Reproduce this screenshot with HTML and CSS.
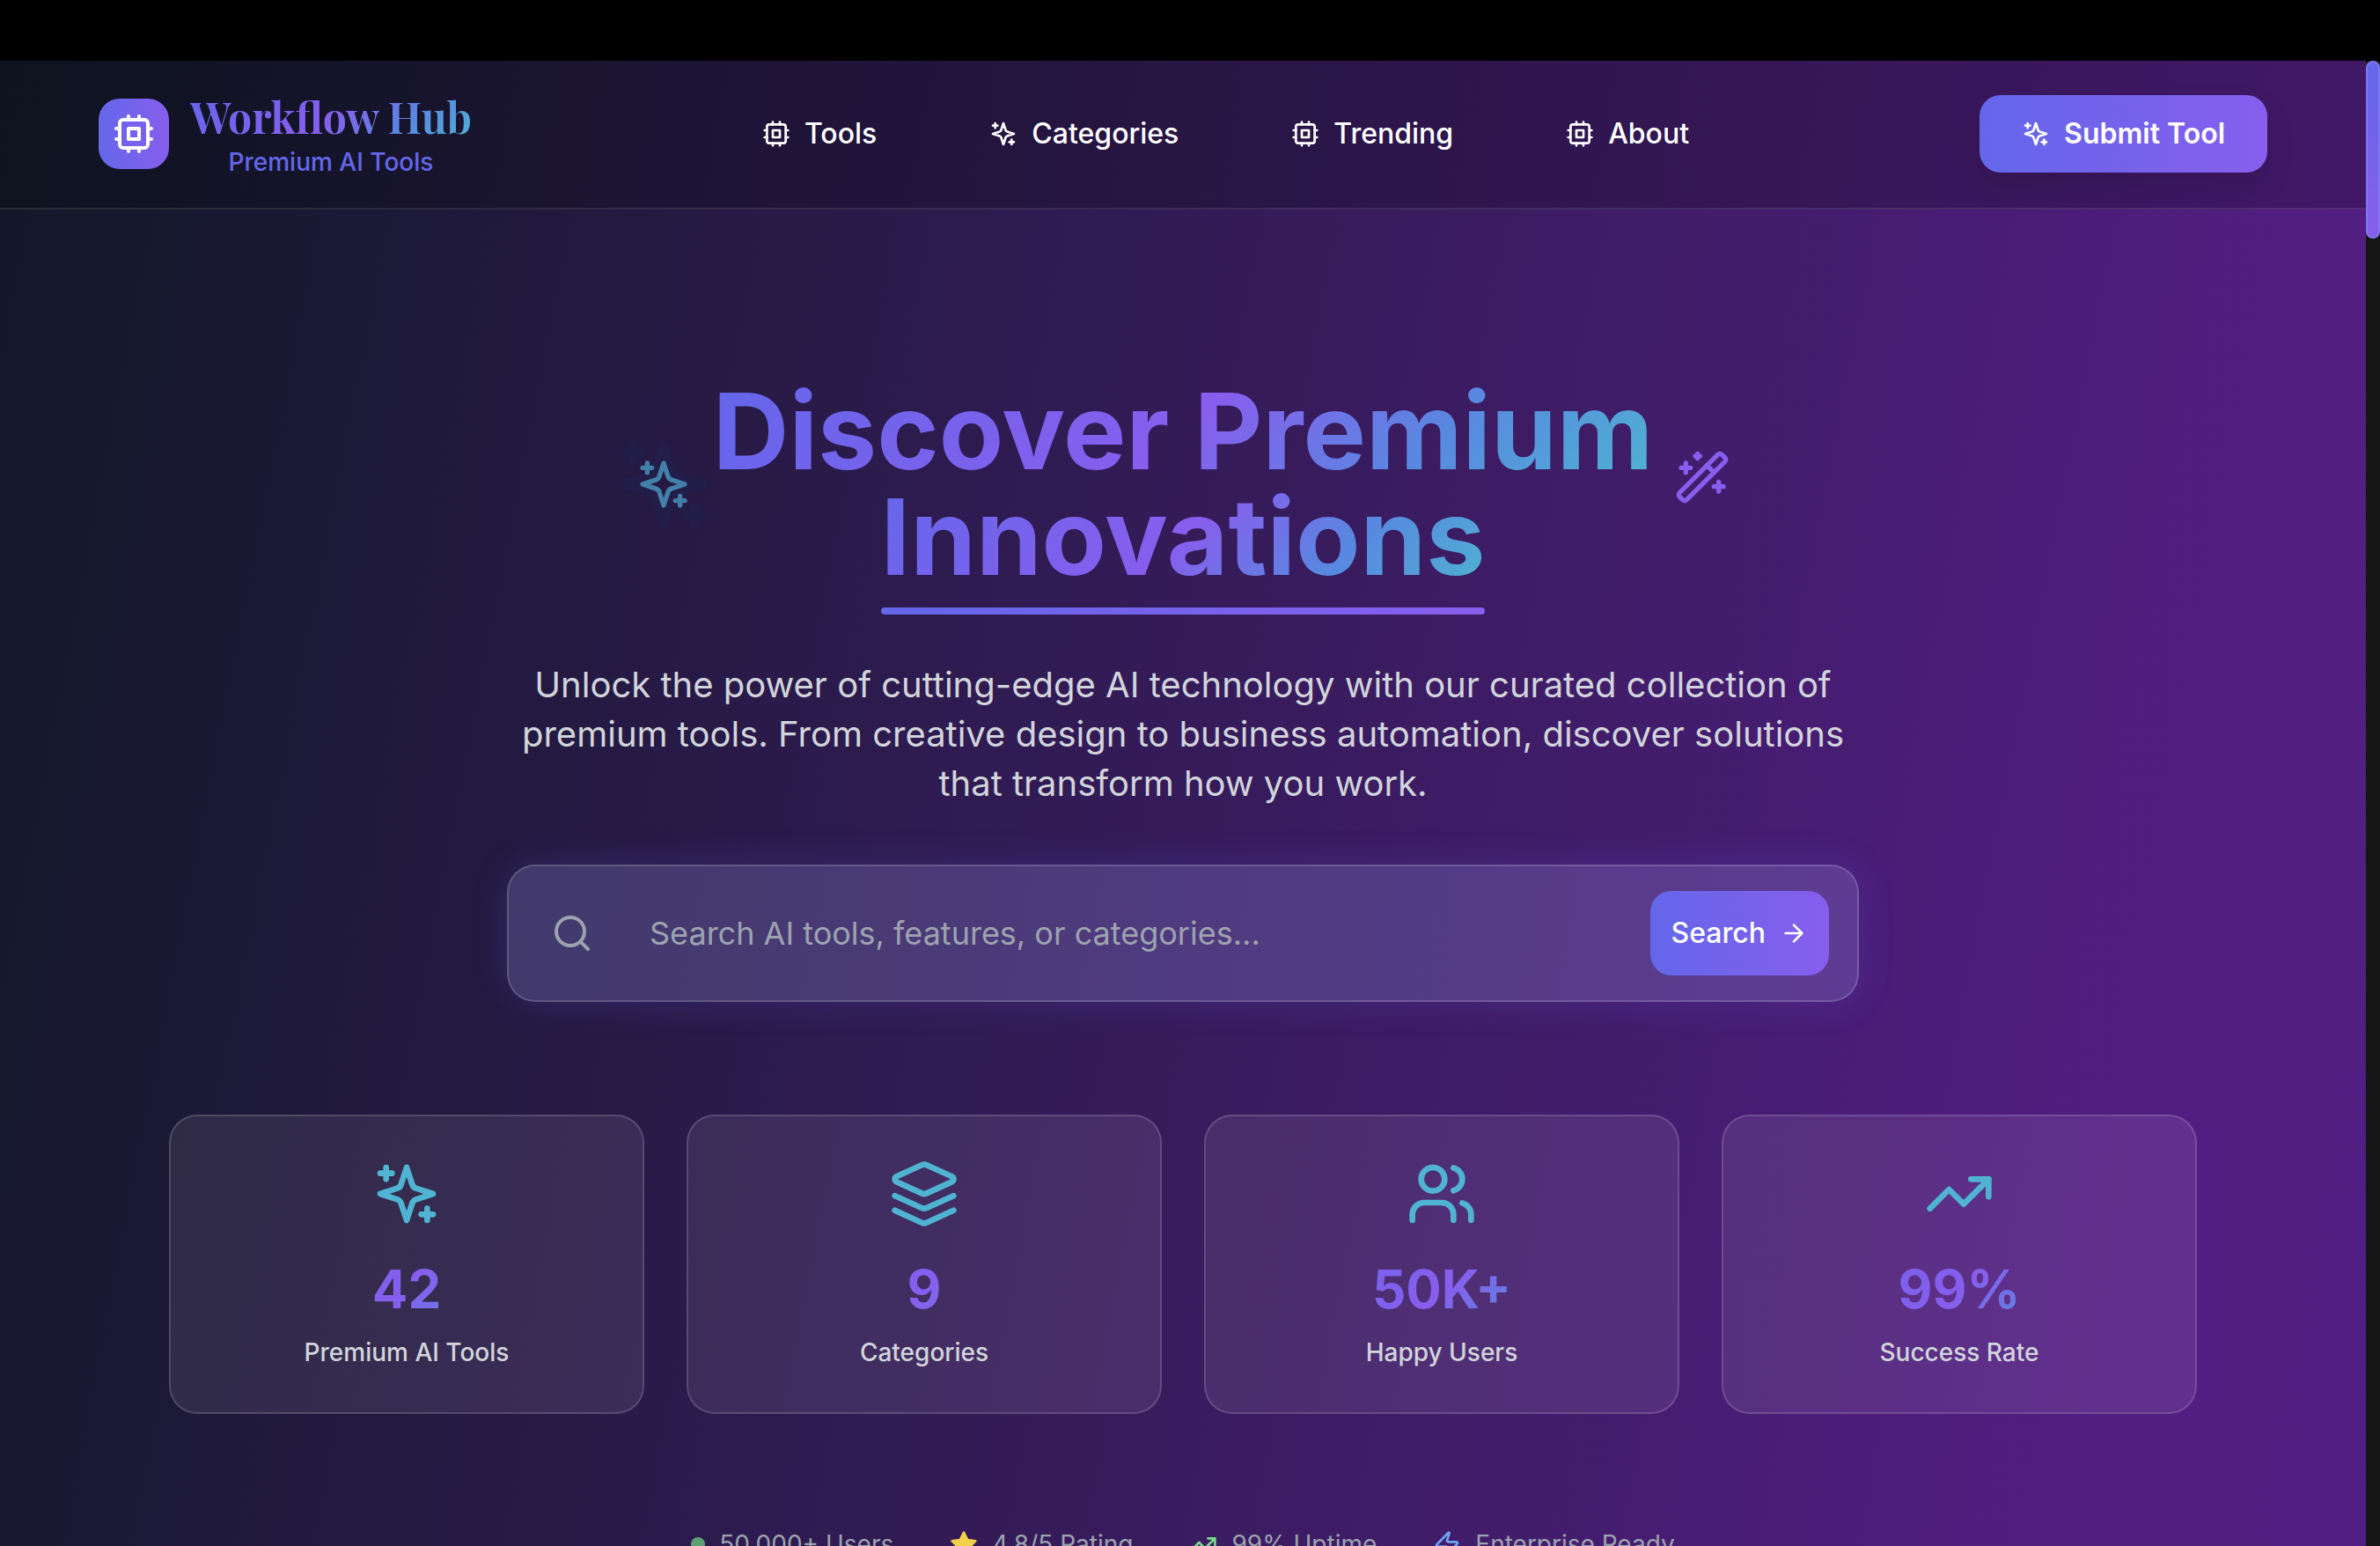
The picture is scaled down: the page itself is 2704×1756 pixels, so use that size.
FILE: index.html
```html
<!DOCTYPE html>
<html lang="en">
<head>
<meta charset="utf-8">
<title>Workflow Hub</title>
<link rel="stylesheet" href="styles.css">
</head>
<body>
<svg class="sprite" aria-hidden="true">
  <symbol id="cpu" viewBox="0 0 24 24"><rect x="4" y="4" width="16" height="16" rx="2"/><rect x="9" y="9" width="6" height="6"/><path d="M15 2v2M15 20v2M2 15h2M2 9h2M20 15h2M20 9h2M9 2v2M9 20v2"/></symbol>
  <symbol id="sparkles" viewBox="0 0 24 24"><path d="m12 3-1.912 5.813a2 2 0 0 1-1.275 1.275L3 12l5.813 1.912a2 2 0 0 1 1.275 1.275L12 21l1.912-5.813a2 2 0 0 1 1.275-1.275L21 12l-5.813-1.912a2 2 0 0 1-1.275-1.275L12 3Z"/><path d="M5 3v4M19 17v4M3 5h4M17 19h4"/></symbol>
  <symbol id="wand" viewBox="0 0 24 24"><path d="m21.64 3.64-1.28-1.28a1.21 1.21 0 0 0-1.72 0L2.36 18.64a1.21 1.21 0 0 0 0 1.72l1.28 1.28a1.2 1.2 0 0 0 1.72 0L21.64 5.36a1.2 1.2 0 0 0 0-1.72"/><path d="m14 7 3 3M5 6v4M19 14v4M10 2v2M7 8H3M21 16h-4M11 3H9"/></symbol>
  <symbol id="search" viewBox="0 0 24 24"><circle cx="11" cy="11" r="8"/><path d="m21 21-4.3-4.3"/></symbol>
  <symbol id="arrow" viewBox="0 0 24 24"><path d="M5 12h14M12 5l7 7-7 7"/></symbol>
  <symbol id="layers" viewBox="0 0 24 24"><path d="m12.83 2.18a2 2 0 0 0-1.66 0L2.6 6.08a1 1 0 0 0 0 1.83l8.58 3.91a2 2 0 0 0 1.66 0l8.58-3.9a1 1 0 0 0 0-1.83Z"/><path d="m22 17.65-9.17 4.16a2 2 0 0 1-1.66 0L2 17.65"/><path d="m22 12.65-9.17 4.16a2 2 0 0 1-1.66 0L2 12.65"/></symbol>
  <symbol id="users" viewBox="0 0 24 24"><path d="M16 21v-2a4 4 0 0 0-4-4H6a4 4 0 0 0-4 4v2"/><circle cx="9" cy="7" r="4"/><path d="M22 21v-2a4 4 0 0 0-3-3.87M16 3.13a4 4 0 0 1 0 7.75"/></symbol>
  <symbol id="trend" viewBox="0 0 24 24"><path d="m22 7-8.5 8.5-5-5L2 17"/><path d="M16 7h6v6"/></symbol>
  <symbol id="star" viewBox="0 0 24 24"><path d="m12 2 3.09 6.26L22 9.27l-5 4.87 1.18 6.88L12 17.77l-6.18 3.25L7 14.14 2 9.27l6.91-1.01Z"/></symbol>
  <symbol id="zap" viewBox="0 0 24 24"><path d="M4 14a1 1 0 0 1-.78-1.63l9.9-10.2a.5.5 0 0 1 .86.46l-1.92 6.02A1 1 0 0 0 13 10h7a1 1 0 0 1 .78 1.63l-9.9 10.2a.5.5 0 0 1-.86-.46l1.92-6.02A1 1 0 0 0 11 14z"/></symbol>
</svg>
<div class="titlebar"></div>
<div class="viewport">
  <div class="page">
    <header class="header">
      <a class="brand" href="#">
        <span class="brand-mark"><svg class="icon icon-md"><use href="#cpu"/></svg></span>
        <span class="brand-text">
          <span class="brand-name">Workflow Hub</span>
          <span class="brand-sub">Premium AI Tools</span>
        </span>
      </a>
      <nav class="nav">
        <a href="#"><svg class="icon"><use href="#cpu"/></svg>Tools</a>
        <a href="#"><svg class="icon"><use href="#sparkles"/></svg>Categories</a>
        <a href="#"><svg class="icon"><use href="#cpu"/></svg>Trending</a>
        <a href="#"><svg class="icon"><use href="#cpu"/></svg>About</a>
      </nav>
      <button class="submit" type="button"><svg class="icon"><use href="#sparkles"/></svg>Submit Tool</button>
    </header>
    <main class="hero">
      <div class="headline">
        <span class="spark">
          <svg class="icon icon-lg ghost"><use href="#sparkles"/></svg>
          <svg class="icon icon-lg glow"><use href="#sparkles"/></svg>
        </span>
        <h1><span class="line">Discover Premium</span><span class="line underlined">Innovations</span></h1>
        <svg class="icon icon-lg wand"><use href="#wand"/></svg>
      </div>
      <p class="lead">Unlock the power of cutting-edge AI technology with our curated collection of premium tools. From creative design to business automation, discover solutions that transform how you work.</p>
      <form class="search" role="search">
        <svg class="icon icon-md"><use href="#search"/></svg>
        <input type="text" aria-label="Search AI tools" placeholder="Search AI tools, features, or categories...">
        <button type="submit">Search<svg class="icon"><use href="#arrow"/></svg></button>
      </form>
      <section class="stats">
        <article class="stat"><svg class="icon icon-xl"><use href="#sparkles"/></svg><strong>42</strong><span>Premium AI Tools</span></article>
        <article class="stat"><svg class="icon icon-xl"><use href="#layers"/></svg><strong>9</strong><span>Categories</span></article>
        <article class="stat"><svg class="icon icon-xl"><use href="#users"/></svg><strong>50K+</strong><span>Happy Users</span></article>
        <article class="stat"><svg class="icon icon-xl"><use href="#trend"/></svg><strong>99%</strong><span>Success Rate</span></article>
      </section>
      <ul class="trust">
        <li><i class="dot"></i>50,000+ Users</li>
        <li><svg class="icon star"><use href="#star"/></svg>4.8/5 Rating</li>
        <li><svg class="icon green"><use href="#trend"/></svg>99% Uptime</li>
        <li><svg class="icon blue"><use href="#zap"/></svg>Enterprise Ready</li>
      </ul>
    </main>
  </div>
  <div class="scroll-track"><div class="scroll-thumb"></div></div>
</div>
</body>
</html>
```
FILE: styles.css
```css
:root {
  --indigo: #6467ea;
  --purple: #875eed;
  --cyan: #4fb3d1;
  --primary: linear-gradient(90deg, var(--indigo), var(--purple));
  --rainbow: linear-gradient(135deg, var(--indigo), var(--purple) 50%, #5888e0 75%, var(--cyan));
}

* { box-sizing: border-box; }

html, body { height: 100%; }

body {
  margin: 0;
  display: flex;
  flex-direction: column;
  overflow: hidden;
  background: #000;
  color: #fff;
  font-family: Inter, "Liberation Sans", sans-serif;
  font-size: 32px;
  line-height: 48px;
}

a { color: inherit; text-decoration: none; }

button, input {
  border: 0;
  color: inherit;
  font: inherit;
}

.sprite { position: absolute; width: 0; height: 0; }

.icon {
  flex: none;
  width: 32px;
  height: 32px;
  fill: none;
  stroke: currentColor;
  stroke-width: 2;
  stroke-linecap: round;
  stroke-linejoin: round;
}
.icon-md { width: 48px; height: 48px; }
.icon-lg { width: 64px; height: 64px; }
.icon-xl { width: 80px; height: 80px; color: var(--cyan); }

.titlebar { flex: none; height: 69px; }

.viewport {
  flex: 1;
  min-height: 0;
  display: flex;
}

.page {
  flex: 1;
  min-width: 0;
  overflow: hidden;
  background: linear-gradient(101deg, #111827, #521e82 89%, #4a2085 140%);
}

.scroll-track { flex: none; width: 16px; background: #161616; }
.scroll-thumb {
  height: 12%;
  border: 2px solid #7c79ee;
  border-radius: 8px;
  background: linear-gradient(var(--indigo), var(--purple));
}

.header {
  display: flex;
  align-items: center;
  justify-content: space-between;
  padding: 31px 112px 32px;
  border-bottom: 2px solid rgba(255, 255, 255, .1);
  background: rgba(0, 0, 0, .2);
}

.brand { display: flex; align-items: center; gap: 24px; }
.brand-mark {
  display: grid;
  place-items: center;
  width: 80px;
  height: 80px;
  border-radius: 24px;
  background: var(--primary);
}
.brand-text { display: flex; flex-direction: column; align-items: center; }
.brand-name {
  font: bold 48px/64px "Playfair Display", "Liberation Serif", serif;
  background: var(--rainbow);
  -webkit-background-clip: text;
  background-clip: text;
  color: transparent;
}
.brand-sub { font-size: 28px; line-height: 40px; font-weight: 500; color: var(--indigo); }

.nav { display: flex; gap: 64px; font-weight: 500; }
.nav a { display: flex; align-items: center; gap: 16px; padding: 0 32px; }

.submit {
  display: flex;
  align-items: center;
  gap: 16px;
  padding: 20px 48px;
  border-radius: 24px;
  background: var(--primary);
  box-shadow: 0 16px 32px rgba(0, 0, 0, .12);
  font-weight: 600;
}

.hero {
  display: flex;
  flex-direction: column;
  align-items: center;
  padding: 192px 192px 0;
}

.headline { display: flex; align-items: center; gap: 24px; }
.headline h1 {
  margin: 0;
  display: flex;
  flex-direction: column;
  align-items: center;
  font-size: 120px;
  line-height: 120px;
  font-weight: 700;
}
.line {
  background: var(--rainbow);
  -webkit-background-clip: text;
  background-clip: text;
  color: transparent;
}
.underlined { position: relative; }
.underlined::after {
  content: "";
  position: absolute;
  left: 0;
  right: 0;
  bottom: -28px;
  height: 8px;
  border-radius: 4px;
  background: var(--primary);
}
.spark { position: relative; display: flex; }
.glow { position: relative; color: #4380a8; }
.ghost {
  position: absolute;
  inset: 0;
  color: #221e49;
  transform: scale(1.875);
}
.wand { color: var(--purple); margin-bottom: 16px; }

.lead {
  max-width: 1536px;
  margin: 80px 0 64px;
  font-size: 40px;
  line-height: 56px;
  text-align: center;
  color: #d1d5db;
}

.search {
  display: flex;
  align-items: center;
  width: 100%;
  max-width: 1536px;
  padding: 28px 32px 28px 48px;
  border: 2px solid rgba(255, 255, 255, .16);
  border-radius: 32px;
  background: rgba(165, 165, 245, .23);
  box-shadow: 0 0 40px rgba(99, 102, 241, .2);
  color: #9ca3af;
}
.search input {
  flex: 1;
  min-width: 0;
  padding: 0 64px;
  background: none;
  font-size: 36px;
  line-height: 48px;
}
.search input::placeholder { color: #9ca3af; opacity: 1; }
.search button {
  display: flex;
  align-items: center;
  gap: 16px;
  height: 96px;
  padding: 0 24px;
  border-radius: 24px;
  background: var(--primary);
  color: #fff;
  font-weight: 500;
}

.stats {
  display: grid;
  grid-template-columns: repeat(4, 1fr);
  gap: 48px;
  width: 100%;
  max-width: 2304px;
  margin-top: 128px;
}
.stat {
  display: flex;
  flex-direction: column;
  align-items: center;
  padding: 48px;
  border: 2px solid rgba(255, 255, 255, .15);
  border-radius: 32px;
  background: rgba(255, 245, 255, .085);
}
.stat strong {
  align-self: stretch;
  margin: 32px 0 16px;
  font-size: 60px;
  line-height: 72px;
  text-align: center;
  background: var(--rainbow);
  -webkit-background-clip: text;
  background-clip: text;
  color: transparent;
}
.stat span { font-size: 28px; line-height: 40px; font-weight: 500; color: #d1d5db; }

.trust {
  display: flex;
  gap: 64px;
  margin: 128px 0 0;
  padding: 0;
  list-style: none;
  font-size: 28px;
  line-height: 40px;
  color: #9ca3af;
}
.trust li { display: flex; align-items: center; gap: 16px; }
.dot { width: 16px; height: 16px; border-radius: 50%; background: #5f9f76; }
.star { color: #f3d04a; fill: currentColor; }
.green { color: #78dc8c; }
.blue { color: #6fa3f5; }
```
